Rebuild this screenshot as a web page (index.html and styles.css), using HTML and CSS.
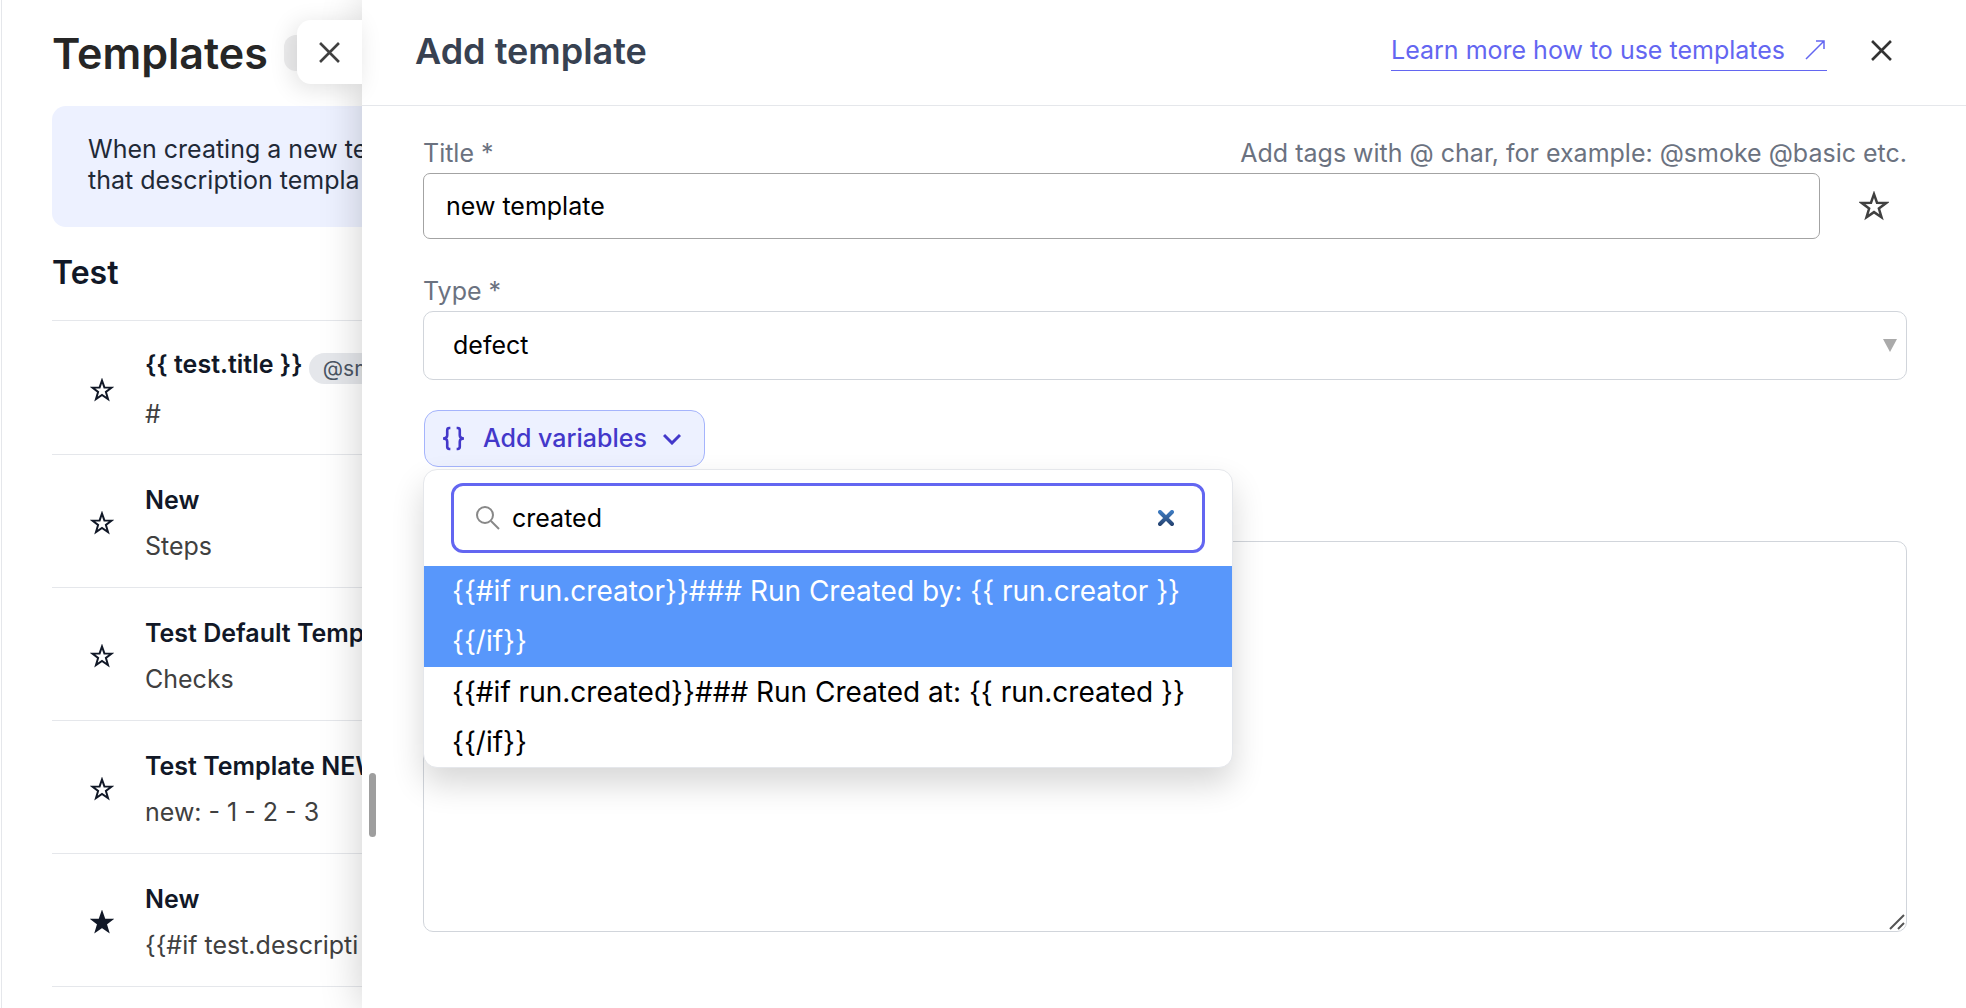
FILE: index.html
```html
<!DOCTYPE html>
<html lang="en">

<head>
    <meta charset="utf-8">
    <title>Templates</title>
    <meta name="viewport" content="width=device-width, initial-scale=1">
    <link rel="stylesheet" href="styles.css">
</head>

<body>
    <svg class="sprite" aria-hidden="true">
        <symbol id="star" viewBox="0 0 24 24">
            <path d="M12 2.5l2.4 6.9 7.3.2-5.8 4.4 2.1 7-6-4.1-6 4.1 2.1-7-5.8-4.4 7.3-.2z" />
        </symbol>
        <symbol id="cross" viewBox="0 0 20 20">
            <path d="M1 1l18 18M19 1L1 19" />
        </symbol>
    </svg>

    <main class="page">
        <div class="page-header">
            <h1>Templates</h1>
            <span class="count"></span>
        </div>
        <p class="info">When creating a new te<br>that description templa</p>

        <h2>Test</h2>
        <ul class="template-list">
            <li>
                <button class="star" aria-label="Mark as default"><svg><use href="#star" /></svg></button>
                <div class="template">
                    <h3>{{ test.title }} <span class="tag">@sm</span></h3>
                    <p>#</p>
                </div>
            </li>
            <li>
                <button class="star" aria-label="Mark as default"><svg><use href="#star" /></svg></button>
                <div class="template">
                    <h3>New</h3>
                    <p>Steps</p>
                </div>
            </li>
            <li>
                <button class="star" aria-label="Mark as default"><svg><use href="#star" /></svg></button>
                <div class="template">
                    <h3>Test Default Temp</h3>
                    <p>Checks</p>
                </div>
            </li>
            <li>
                <button class="star" aria-label="Mark as default"><svg><use href="#star" /></svg></button>
                <div class="template">
                    <h3>Test Template NEW</h3>
                    <p>new: - 1 - 2 - 3</p>
                </div>
            </li>
            <li>
                <button class="star active" aria-label="Default template"><svg><use href="#star" /></svg></button>
                <div class="template">
                    <h3>New</h3>
                    <p>{{#if test.descripti</p>
                </div>
            </li>
        </ul>
    </main>

    <section class="drawer">
        <button class="drawer-tab" aria-label="Close panel"><svg><use href="#cross" /></svg></button>
        <div class="drag-handle"></div>

        <header class="drawer-header">
            <h2>Add template</h2>
            <a class="learn-more" href="#">
                Learn more how to use templates
                <svg viewBox="0 0 20 20"><path d="M1 19L19 1M11 1h8v8" /></svg>
            </a>
            <button class="close" aria-label="Close"><svg><use href="#cross" /></svg></button>
        </header>

        <form class="drawer-body">
            <div class="field">
                <div class="label-row">
                    <label for="title">Title *</label>
                    <span>Add tags with @ char, for example: @smoke @basic etc.</span>
                </div>
                <div class="title-row">
                    <input id="title" type="text" value="new template">
                    <button type="button" class="star" aria-label="Set as default"><svg><use href="#star" /></svg></button>
                </div>
            </div>

            <div class="field">
                <div class="label-row">
                    <label for="type">Type *</label>
                </div>
                <div class="select">
                    <select id="type">
                        <option>defect</option>
                    </select>
                    <svg viewBox="0 0 14 13"><path d="M0 0h14L7 13z" /></svg>
                </div>
            </div>

            <div class="variables">
                <button type="button" class="add-variables">
                    <svg class="braces" viewBox="0 0 22 22">
                        <path d="M8 1H7a2 2 0 0 0-2 2v5c0 2-1 3-4 3 3 0 4 1 4 3v5a2 2 0 0 0 2 2h1M14 1h1a2 2 0 0 1 2 2v5c0 2 1 3 4 3-3 0-4 1-4 3v5a2 2 0 0 1-2 2h-1" />
                    </svg>
                    Add variables
                    <svg class="chevron" viewBox="0 0 18 12"><path d="M1 2l8 8 8-8" /></svg>
                </button>
                <div class="dropdown">
                    <div class="search">
                        <svg class="magnifier" viewBox="0 0 24 24"><circle cx="9" cy="9" r="8" /><path d="M15 15l8 8" /></svg>
                        <input type="text" value="created" aria-label="Search variables">
                        <button type="button" class="clear" aria-label="Clear">
                            <svg viewBox="0 0 16 16">
                                <defs>
                                    <linearGradient id="clear-fill" gradientUnits="userSpaceOnUse" x1="0" y1="0" x2="0" y2="16">
                                        <stop offset="0" stop-color="#4080c8" />
                                        <stop offset="1" stop-color="#24406c" />
                                    </linearGradient>
                                </defs>
                                <path d="M2 2l12 12M14 2L2 14" />
                            </svg>
                        </button>
                    </div>
                    <ul role="listbox">
                        <li role="option" aria-selected="true">{{#if run.creator}}### Run Created by: {{ run.creator }}<br>{{/if}}</li>
                        <li role="option">{{#if run.created}}### Run Created at: {{ run.created }}<br>{{/if}}</li>
                    </ul>
                </div>
            </div>

            <div class="description">
                <textarea aria-label="Description"></textarea>
                <svg viewBox="0 0 16 16"><path d="M1 15L15 1M9 15l6-6" /></svg>
            </div>
        </form>
    </section>
</body>

</html>
```

FILE: styles.css
```css
* {
    box-sizing: border-box;
}

html, body {
    height: 100%;
}

body {
    margin: 0;
    display: flex;
    overflow: hidden;
    background: #fff;
    color: #111827;
    font-family: Inter, "Liberation Sans", sans-serif;
    font-size: 25px;
    line-height: 31px;
}

h1, h2, h3, p, ul {
    margin: 0;
    padding: 0;
}

ul {
    list-style: none;
}

button {
    display: flex;
    align-items: center;
    justify-content: center;
    padding: 0;
    border: 0;
    background: none;
    color: inherit;
    font: inherit;
    cursor: pointer;
}

svg {
    flex: none;
    fill: none;
    stroke: currentColor;
    stroke-width: 2;
}

input, select, textarea {
    font: inherit;
    color: #000;
    background: #fff;
}

.sprite {
    display: none;
}

/* templates list */
.page {
    flex: none;
    width: 361px;
    margin-left: 1px;
    padding-left: 50px;
    border-left: 1px solid #e5e7eb;
    overflow: hidden;
    white-space: nowrap;
}

.page-header {
    display: flex;
    align-items: center;
    gap: 16px;
    height: 106px;
}

.page h1 {
    color: #262626;
    font-size: 43px;
    font-weight: 600;
    line-height: 56px;
}

.count {
    flex: none;
    width: 48px;
    height: 36px;
    border-radius: 12px;
    background: #ededee;
}

.info {
    height: 121px;
    padding: 28px 36px;
    border-radius: 14px 0 0 14px;
    background: #edf1ff;
    color: #1f2937;
}

.page h2 {
    padding: 26px 0 27px;
    font-size: 32px;
    font-weight: 600;
    line-height: 40px;
}

.template-list {
    border-top: 1px solid #e5e7eb;
}

.template-list li {
    display: flex;
    align-items: center;
    height: 133px;
    padding-top: 4px;
    border-bottom: 1px solid #e5e7eb;
}

.template-list li:first-child {
    height: 134px;
}

.star svg {
    width: 24px;
    height: 24px;
}

.template-list .star {
    flex: none;
    width: 93px;
    padding-left: 7px;
}

.active svg {
    fill: currentColor;
}

.template h3 {
    font-size: 25px;
    font-weight: 600;
}

.template p {
    padding-top: 15px;
    color: #404040;
}

.tag {
    display: inline-block;
    padding: 0 14px;
    border-radius: 16px;
    background: #e5e7eb;
    color: #4b5563;
    font-size: 21px;
    font-weight: 400;
    vertical-align: -3px;
}

/* drawer */
.drawer {
    position: relative;
    flex: 1;
    min-width: 0;
    background: #fff;
    box-shadow: 0 0 40px rgba(0, 0, 0, .2);
}

.drawer-tab {
    position: absolute;
    top: 20px;
    right: 100%;
    width: 65px;
    height: 64px;
    border-radius: 14px 0 0 14px;
    background: #fff;
    box-shadow: -4px 4px 24px rgba(0, 0, 0, .12);
    color: #404040;
}

.drawer-tab svg, .close svg {
    width: 21px;
    height: 21px;
}

.drag-handle {
    position: absolute;
    top: 773px;
    left: 7px;
    width: 7px;
    height: 64px;
    border-radius: 4px;
    background: #9e9e9e;
}

.drawer-header {
    display: flex;
    align-items: center;
    height: 106px;
    padding: 0 74px 4px 53px;
    border-bottom: 1px solid #e5e7eb;
}

.drawer-header h2 {
    margin-right: auto;
    color: #374151;
    font-size: 36px;
    font-weight: 600;
    line-height: 44px;
}

.learn-more {
    display: flex;
    align-items: center;
    gap: 20px;
    margin-right: 44px;
    padding: 4px 2px 4px 0;
    border-bottom: 1px solid #6366f1;
    color: #6366f1;
    text-decoration: none;
}

.learn-more svg {
    width: 20px;
    height: 20px;
    stroke-width: 1.5;
}

.close {
    color: #333;
}

.drawer-tab svg, .close svg {
    stroke-width: 2.5;
}

.drawer-body {
    padding: 32px 59px 32px 61px;
}

.field {
    margin-bottom: 37px;
}

.label-row {
    display: flex;
    justify-content: space-between;
    padding-bottom: 4px;
    color: #6b7280;
}

.field + .field {
    margin-bottom: 30px;
}

.title-row {
    display: flex;
}

.title-row input {
    flex: 1;
    height: 66px;
    padding: 0 22px;
    border: 1px solid #a3a3a3;
    border-radius: 7px;
}

.title-row .star {
    width: 87px;
    padding-left: 21px;
    color: #404040;
}

.title-row .star svg {
    width: 30px;
    height: 30px;
}

.select {
    position: relative;
}

.select select {
    display: block;
    width: 100%;
    height: 69px;
    padding: 0 29px;
    border: 1px solid #d1d5db;
    border-radius: 10px;
    appearance: none;
}

.select svg {
    position: absolute;
    top: 28px;
    right: 10px;
    width: 14px;
    height: 13px;
    fill: #aaa;
    stroke: none;
}

.variables {
    position: relative;
}

.add-variables {
    height: 57px;
    margin-left: 1px;
    padding: 0 23px 0 17px;
    border: 1px solid #a5b4fc;
    border-radius: 14px;
    background: #edf1ff;
    color: #4338ca;
    font-weight: 500;
}

.braces {
    width: 23px;
    height: 23px;
    margin-right: 18px;
    overflow: visible;
    stroke-width: 2.5;
}

.chevron {
    width: 18px;
    height: 12px;
    margin-left: 16px;
    stroke-width: 3;
}

.dropdown {
    position: absolute;
    top: 59px;
    left: 0;
    z-index: 1;
    width: 810px;
    border: 1px solid #e5e7eb;
    border-radius: 14px;
    background: #fff;
    box-shadow: 0 16px 32px rgba(0, 0, 0, .16);
    overflow: hidden;
}

.search {
    display: flex;
    align-items: center;
    height: 70px;
    margin: 13px 27px;
    padding: 0 22px;
    border: 3px solid #6366f1;
    border-radius: 12px;
}

.search input {
    flex: 1;
    min-width: 0;
    padding: 0 12px;
    border: 0;
    outline: 0;
}

.magnifier {
    width: 24px;
    height: 24px;
    color: #888;
}

.clear {
    width: 28px;
    height: 28px;
}

.clear svg {
    width: 16px;
    height: 16px;
    stroke: url(#clear-fill);
    stroke-width: 4;
    stroke-linecap: round;
}

.dropdown li {
    padding: 0 28px;
    color: #000;
    font-size: 28px;
    line-height: 50px;
}

.dropdown li[aria-selected] {
    padding-bottom: 1px;
    background: #5897fb;
    color: #fff;
}

.description {
    position: relative;
    margin-top: 74px;
}

.description textarea {
    display: block;
    width: 100%;
    height: 391px;
    padding: 16px;
    border: 1px solid #d1d5db;
    border-radius: 10px;
    resize: none;
}

.description svg {
    position: absolute;
    right: 2px;
    bottom: 2px;
    width: 16px;
    height: 16px;
    color: #555;
}
```
